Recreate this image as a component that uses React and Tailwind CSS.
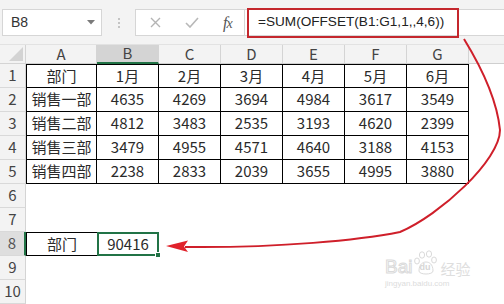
const font = { fontFamily: '"Noto Sans", "Noto Sans CJK SC", sans-serif' };

const cols = ["A", "B", "C", "D", "E", "F", "G"];

const data = [
  ["部门", "1月", "2月", "3月", "4月", "5月", "6月"],
  ["销售一部", "4635", "4269", "3694", "4984", "3617", "3549"],
  ["销售二部", "4812", "3483", "2535", "3193", "4620", "2399"],
  ["销售三部", "3479", "4955", "4571", "4640", "3188", "4153"],
  ["销售四部", "2238", "2833", "2039", "3655", "4995", "3880"],
];

const FormulaBar = () => (
  <div className="h-[45px] bg-[#f3f3f3] flex items-start pt-[9px] border-b border-[#e2e2e2]">
    <div className="ml-[2px] w-[100px] h-[27px] bg-white border border-[#d6d6d6] flex items-center justify-between pl-[8px] pr-[6px]">
      <span className="text-[14px] text-[#333]" style={{ fontFamily: '"Liberation Sans", sans-serif' }}>B8</span>
      <svg width="8" height="5" viewBox="0 0 8 5">
        <path d="M0 0 L8 0 L4 4.5 Z" fill="#7a7a7a" />
      </svg>
    </div>
    <div className="w-[33px] h-[27px] flex flex-col items-center justify-center gap-[2px]">
      <span className="w-[2px] h-[2px] bg-[#c4c4c4]" />
      <span className="w-[2px] h-[2px] bg-[#c4c4c4]" />
      <span className="w-[2px] h-[2px] bg-[#c4c4c4]" />
    </div>
    <div className="w-[110px] h-[27px] bg-white border border-[#d6d6d6] flex items-center">
      <svg className="ml-[14px]" width="11" height="11" viewBox="0 0 11 11">
        <path d="M1 1 L10 10 M10 1 L1 10" stroke="#b4b4b4" strokeWidth="1.4" />
      </svg>
      <svg className="ml-[24px]" width="14" height="11" viewBox="0 0 14 11">
        <path d="M1 6 L5 10 L13 1" stroke="#b8b8b8" strokeWidth="1.6" fill="none" />
      </svg>
      <span className="ml-[24px] text-[16px] italic text-[#555] tracking-[-1px]" style={{ fontFamily: '"Liberation Serif", serif' }}>
        f<span className="text-[14px]">x</span>
      </span>
    </div>
    <div className="flex-1 h-[27px] bg-white border-y border-[#d6d6d6] flex items-center pl-[13px]">
      <span className="text-[13.6px] text-[#222]" style={{ fontFamily: '"Liberation Sans", sans-serif' }}>
        =SUM(OFFSET(B1:G1,1,,4,6))
      </span>
    </div>
  </div>
);

const Header = () => (
  <>
    <div className="bg-[#f3f3f3] border-r border-b border-[#d4d4d4] flex items-end justify-end pr-[2px] pb-[2px]">
      <svg width="14" height="14" viewBox="0 0 14 14">
        <path d="M14 0 L14 14 L0 14 Z" fill="#d3d3d3" />
      </svg>
    </div>
    {cols.map((c) => (
      <div
        key={c}
        className={`flex items-center justify-center text-[15px] text-[#444] border-r border-[#d4d4d4] ${
          c === "B" ? "bg-[#d4d4d4] border-b-2 border-b-[#217346]" : "bg-[#f3f3f3] border-b border-b-[#cfcfcf]"
        }`}
      >
        {c}
      </div>
    ))}
    <div className="bg-[#f3f3f3] border-b border-[#cfcfcf]" />
  </>
);

const Sheet = () => {
  const rows = [];
  for (let r = 0; r < 10; r++) {
    const n = r + 1;
    rows.push(
      <div
        key={`h${n}`}
        className={`flex items-center justify-center text-[15px] border-b border-[#d9d9d9] ${
          n === 8 ? "bg-[#dedede] text-[#555] border-r-2 border-r-[#217346]" : "bg-[#f3f3f3] text-[#444] border-r border-r-[#d4d4d4]"
        }`}
      >
        {n}
      </div>
    );
    for (let c = 0; c < 7; c++) {
      let cls = "flex items-center justify-center text-[15px] text-[#2a2a2a]";
      let content = null;
      if (r < 5) {
        cls += " border-r border-b border-black";
        if (r === 0) cls += " border-t";
        if (c === 0) cls += " border-l";
        content = data[r][c];
      } else if (n === 8 && c === 0) {
        cls += " border-l border-t border-b border-black";
        content = "部门";
      } else if (n === 8 && c === 1) {
        cls += " border-2 border-[#217346] relative";
        content = (
          <>
            90416
            <span className="absolute -right-[4px] -bottom-[4px] w-[6px] h-[6px] bg-[#217346] border border-white" />
          </>
        );
      }
      rows.push(
        <div key={`${n}-${c}`} className={cls}>
          {content}
        </div>
      );
    }
    rows.push(<div key={`f${n}`} />);
  }
  return rows;
};

const Watermark = () => (
  <div className="absolute left-[385px] top-[250px] text-[#dcdcdc] pointer-events-none select-none">
    <div className="flex items-end">
      <span className="text-[19px] leading-none text-white" style={{ fontFamily: '"Liberation Sans", sans-serif', WebkitTextStroke: "1px #dadada" }}>
        Bai
      </span>
      <div className="relative w-[26px] h-[26px] mx-[1px]">
        <svg width="26" height="26" viewBox="0 0 26 26" className="absolute inset-0">
          <g fill="none" stroke="#dadada" strokeWidth="1">
            <ellipse cx="9" cy="5" rx="2.6" ry="3.2" />
            <ellipse cx="16" cy="4" rx="2.6" ry="3.2" />
            <ellipse cx="4" cy="11" rx="2.4" ry="3" />
            <ellipse cx="21" cy="10" rx="2.4" ry="3" />
            <path d="M6 21 C6 14 10 12 13 12 C16 12 20 14 20 21 C20 25 6 25 6 21 Z" />
          </g>
        </svg>
        <span className="absolute left-[6px] top-[13px] text-[9px] font-bold leading-none text-[#d6d6d6]" style={{ fontFamily: '"Liberation Sans", sans-serif' }}>
          du
        </span>
      </div>
      <span className="text-[15px] leading-none text-[#dedede]" style={{ fontFamily: '"Noto Sans CJK SC", sans-serif' }}>
        经验
      </span>
    </div>
    <div className="text-[8px] leading-none mt-[4px] text-[#dcdcdc]" style={{ fontFamily: '"Liberation Sans", sans-serif' }}>
      jingyan.baidu.com
    </div>
  </div>
);

const Arrow = () => (
  <svg className="absolute inset-0 pointer-events-none" width="504" height="304" viewBox="0 0 504 304">
    <path
      d="M464 39 C480 65 497 100 500 130 C500 160 440 215 400 232 C360 240 280 248 185 247"
      fill="none"
      stroke="#cf1f2a"
      strokeWidth="2"
    />
    <path d="M166 246 L188 240.5 L184 246.5 L188 252 Z" fill="#e0222b" />
  </svg>
);

export default function App() {
  return (
    <div className="w-[504px] h-[304px] relative overflow-hidden bg-white" style={font}>
      <FormulaBar />
      <div className="grid grid-cols-[26px_71px_62px_62px_62px_62px_62px_62px_1fr] grid-rows-[19px_repeat(10,24px)]" style={{ fontFamily: '"Noto Sans CJK SC", sans-serif' }}>
        <Header />
        <Sheet />
      </div>
      <div className="absolute left-[247px] top-[8px] w-[212px] h-[30px] border-2 border-[#c4272d]" />
      <Arrow />
      <Watermark />
    </div>
  );
}
